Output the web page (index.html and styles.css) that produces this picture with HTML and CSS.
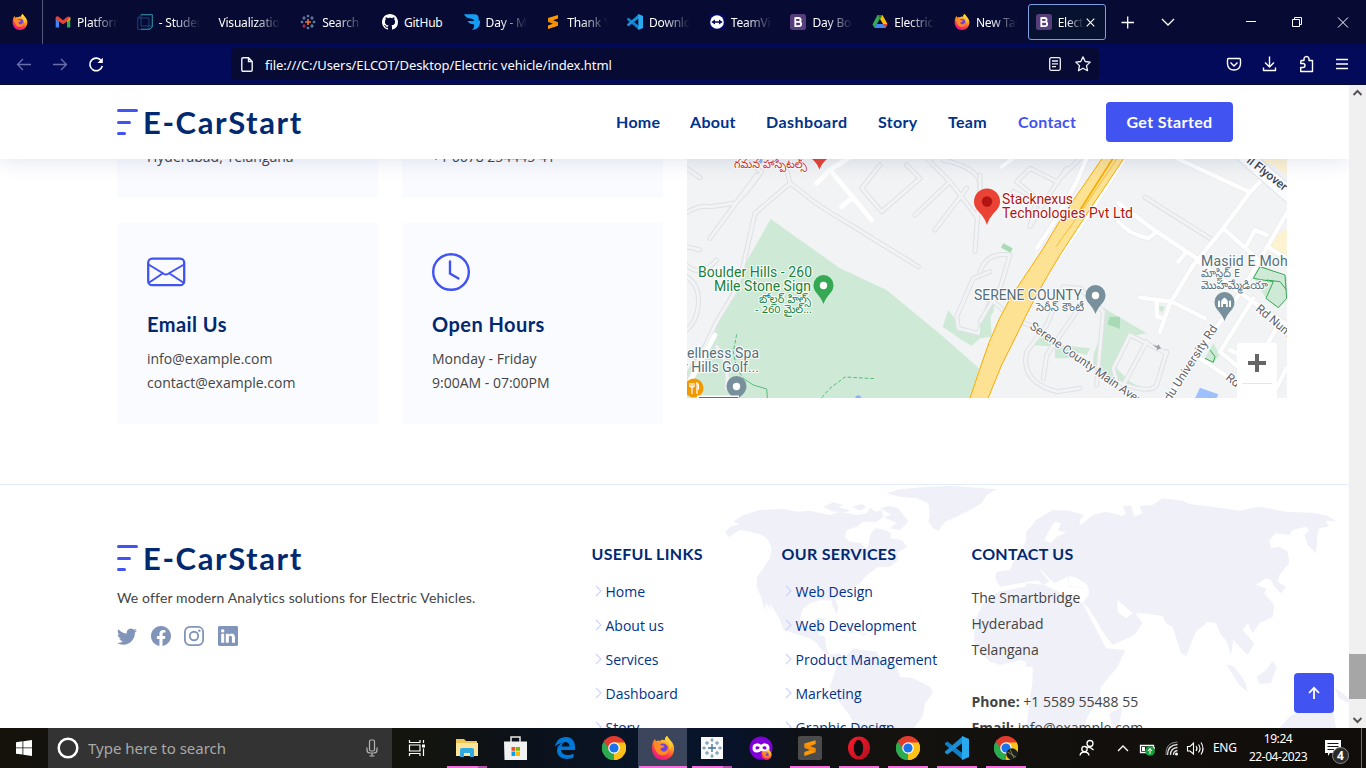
FILE: index.html
```html
<!DOCTYPE html>
<html lang="en">
<head>
<meta charset="utf-8">
<title>E-CarStart</title>
<link rel="stylesheet" href="styles.css">
</head>
<body>
<svg class="defs" width="0" height="0">
  <defs>
    <linearGradient id="ffg" x1=".8" y1="0" x2=".3" y2="1"><stop offset="0" stop-color="#fff44f"/><stop offset=".4" stop-color="#ff9a1f"/><stop offset=".7" stop-color="#ff3b4e"/><stop offset="1" stop-color="#e8128c"/></linearGradient>
    <linearGradient id="opg" x1="0" y1="0" x2="1" y2="1"><stop offset="0" stop-color="#ff1b2d"/><stop offset="1" stop-color="#b0101f"/></linearGradient>
    <symbol id="firefox" viewBox="0 0 24 24"><path fill="url(#ffg)" d="M1 12C1 8 2 5 4 3L5 5.500Q7 4 9 5C11 3 12 4 14 4C14 2 15 1 16 0C17 3 22 5 23 11C24 18 19 24 12 24S1 19 1 12Z"/><circle cx="12" cy="12.500" r="5" fill="#7440dc"/><path fill="#ff8b22" d="M3 7C6 6 8 8 11 9.500C14 9 14 11 11 12C9 12 9 14 11 15C14 17 16 14 17 12C18 18 14 20 10 19C5 18 3 12 3 7Z"/><path fill="#ffd13b" d="M14 4C18 6 20 9 18 14C22 11 21 6 16 0C14 1 14 3 14 4Z"/></symbol>
    <symbol id="chrome" viewBox="0 0 24 24"><path fill="#e33b2e" d="M12 12L1.600 6A12 12 0 0 1 22.400 6Z"/><path fill="#fbc116" d="M12 12L22.400 6A12 12 0 0 1 12 24Z"/><path fill="#2da94f" d="M12 12L12 24A12 12 0 0 1 1.600 6Z"/><path fill="#e33b2e" d="M12 6.500H22.600L21 4H2L7 14Z"/><path fill="#2da94f" d="M1.600 6L7 15L12 18L10 23.900A12 12 0 0 1 1.600 6Z"/><path fill="#fbc116" d="M22.600 6.500H12L17 15L12 24A12 12 0 0 0 22.600 6.500Z"/><circle cx="12" cy="12" r="5.800" fill="#fff"/><circle cx="12" cy="12" r="4.600" fill="#1a73e8"/></symbol>
    <symbol id="vscode" viewBox="0 0 24 24"><path fill="#0f7fc7" d="M0 7L2.500 5.500L18 17.500V24L0 8.500Z"/><path fill="#1a8fd6" d="M0 17L2.500 18.500L18 6.500V0L0 15.500Z"/><path fill="#29a9ee" d="M17 0L24 3V21L17 24Z"/></symbol>
    <symbol id="boot" viewBox="0 0 16 16"><rect width="16" height="16" rx="2.500" fill="#563d7c"/><path fill="none" stroke="#fff" stroke-width="1.800" d="M5.300 4H8.700Q10.600 4 10.600 6Q10.600 7.800 8.700 7.800H5.300M8.700 7.800Q11.200 7.800 11.200 10Q11.200 12.100 8.900 12.100H5.300V3.200"/></symbol>
    <symbol id="subl" viewBox="0 0 16 16"><path fill="#ff9800" d="M3 4L13 1V4.500L8 6.300L13 8.200V11.800L3 15V11.500L8 9.700L3 7.800Z"/><path fill="#d9780a" d="M3 7.800L8 9.700L13 11.800V8.200L8 6.300L3 4.500Z" opacity=".4"/></symbol>
    <symbol id="tableau" viewBox="0 0 24 24"><g fill="none" stroke-width="1.800"><path stroke="#e8762d" stroke-width="2.400" d="M12 7.500V16.500M7.500 12H16.500"/><path stroke="#6a9ab8" d="M12 1V5M10 3H14M12 19V23M10 21H14M1 12H5M3 10V14M19 12H23M21 10V14"/><path stroke="#7c87b5" d="M6 3.500V8.500M3.500 6H8.500M18 3.500V8.500M15.500 6H20.500"/><path stroke="#d8304a" d="M6 15.500V20.500M3.500 18H8.500"/><path stroke="#6f9fb5" d="M18 15.500V20.500M15.500 18H20.500"/></g></symbol>
    <symbol id="brand" viewBox="0 0 22 27"><g stroke="#4154f1" stroke-width="3" stroke-linecap="round"><path d="M1.500 1.500H19.500M1.500 13.500H12.500M1.500 24.500H7.500"/></g></symbol>
    <symbol id="chev" viewBox="0 0 7 12"><path d="M1 1L6 6L1 11" fill="none" stroke="#d0d4fc" stroke-width="1.200"/></symbol>
  </defs>
</svg>

<div class="tabs">
  <div class="pinned"><svg width="16" height="16"><use href="#firefox"/></svg></div>
  <div class="tab"><svg width="16" height="16" viewBox="0 0 16 16"><path fill="#4285f4" d="M.7 4V13.500H4V7Z"/><path fill="#34a853" d="M12 7V13.500H15.300V4Z"/><path fill="#fbbc04" d="M12 3.500L15.300 3V5.500L12 8Z"/><path fill="#ea4335" d="M.7 3.500Q2 1.500 4 3L8 6.200L12 3Q14 1.800 15.300 3.300L12 7.500L8 10.300L4 7.500L.7 5Z"/></svg><span class="label">Platform</span></div>
  <div class="tab"><svg width="16" height="16" viewBox="0 0 16 16"><path d="M4 .7H15.300V13L12.500 15.300H.7V4L4 .7V12H15.300M.7 4H12V15.300" fill="none" stroke="#23599a" stroke-width=".7"/><path d="M4 .7H15.300V13L12.500 15.300H4" fill="none" stroke="#2d8d99"/></svg><span class="label">- Student</span></div>
  <div class="tab"><span class="label wide">Visualization</span></div>
  <div class="tab"><svg width="16" height="16"><use href="#tableau"/></svg><span class="label">Search V</span></div>
  <div class="tab"><svg width="16" height="16" viewBox="0 0 16 16"><path fill="#fff" d="M8 0C3.580 0 0 3.580 0 8c0 3.540 2.290 6.530 5.470 7.590.4.070.55-.17.55-.38 0-.19-.01-.82-.01-1.490-2.010.37-2.530-.49-2.690-.94-.09-.23-.48-.94-.82-1.130-.28-.15-.68-.52-.01-.53.63-.01 1.080.58 1.230.82.72 1.210 1.870.87 2.330.66.070-.52.28-.87.51-1.070-1.780-.2-3.640-.89-3.640-3.950 0-.87.31-1.590.82-2.150-.08-.2-.36-1.020.08-2.120 0 0 .67-.21 2.200.82.64-.18 1.320-.27 2-.27.68 0 1.360.09 2 .27 1.530-1.040 2.200-.82 2.200-.82.44 1.100.16 1.920.08 2.120.51.56.82 1.270.82 2.150 0 3.070-1.870 3.750-3.650 3.950.29.25.54.73.54 1.480 0 1.070-.01 1.930-.01 2.200 0 .21.15.46.55.38A8.012 8.012 0 0 0 16 8c0-4.420-3.580-8-8-8z"/></svg><span class="label solid">GitHub</span></div>
  <div class="tab"><svg width="16" height="16" viewBox="0 0 16 16"><path fill="#159df5" d="M0 .3H11Q15.500 1 14.500 6L16 7Q16.500 15 8 16Q11 13 10 10.500Q5 10 3.500 7H10Q10 4.500 6 4.500Q2 4 0 .3Z"/></svg><span class="label">Day - M</span></div>
  <div class="tab"><svg width="16" height="16"><use href="#subl"/></svg><span class="label">Thank Yo</span></div>
  <div class="tab"><svg width="16" height="16"><use href="#vscode"/></svg><span class="label">Download</span></div>
  <div class="tab"><svg width="16" height="16" viewBox="0 0 16 16"><rect width="16" height="16" rx="2" fill="#050a5c"/><circle cx="8" cy="8" r="6.800" fill="#fff"/><path fill="#050a5c" d="M2.300 8L6 5.500V7.200H10V5.500L13.700 8L10 10.500V8.800H6V10.500Z"/></svg><span class="label">TeamVie</span></div>
  <div class="tab"><svg width="16" height="16"><use href="#boot"/></svg><span class="label">Day Boo</span></div>
  <div class="tab"><svg width="16" height="16" viewBox="0 0 16 16"><path fill="#34a853" d="M5.500 1H10L5.200 9.500L2.500 14L.5 10.500Z"/><path fill="#fbbc04" d="M5.500 1H10.500L15.500 10H11L8 5Z"/><path fill="#4285f4" d="M4.500 10H15.500L13.500 14H2.500Z"/><path fill="#ea4335" d="M11 10H15.500L13.500 14Z"/><path fill="#188038" d="M5.500 1H10.500L8 5.200Z"/></svg><span class="label">Electric V</span></div>
  <div class="tab"><svg width="16" height="16"><use href="#firefox"/></svg><span class="label">New Tab</span></div>
  <div class="tab active"><svg width="16" height="16"><use href="#boot"/></svg><span class="label short">Electric</span><svg class="x" width="9" height="9" viewBox="0 0 9 9"><path d="M.7.700L8.300 8.300M8.300.7L.7 8.300" stroke="#fff" stroke-width="1.100"/></svg></div>
  <svg class="wincontrols" width="260" height="44" viewBox="1106 0 260 44" fill="none" stroke="#fff" stroke-width="1.300"><path d="M1121.500 22.500H1134M1127.700 16.500V28.500M1162 19L1168 25L1174 19"/><path stroke-width="1" d="M1246 21.500H1256M1292.500 19.500H1299.500V26.500H1292.500ZM1294.500 19V17.500H1301.500V24.500H1300M1338 17.500L1348 27.500M1348 17.500L1338 27.500"/></svg>
</div>

<div class="toolbar">
  <svg class="navbtns" width="231" height="40" viewBox="0 44 231 40" fill="none" stroke-width="1.300"><path stroke="#6a6ea8" d="M31 64.500H17.500M23 59L17.500 64.500L23 70M53 64.500H66.500M61 59L66.500 64.500L61 70"/><path stroke="#fff" stroke-width="1.600" d="M101.500 61A6.300 6.300 0 1 0 102.300 66"/><path fill="#fff" d="M102.800 57.800V63H97.500Z"/></svg>
  <div class="urlbar">
    <svg width="12" height="15" viewBox="0 0 12 15" fill="none" stroke="#f2f2fa" stroke-width="1.400"><path d="M2 .8H7.500L11.200 4.500V13Q11.200 14.200 10 14.200H2Q.8 14.200.8 13V2Q.8.8 2 .8ZM7.500.8V4.500H11.200"/></svg>
    <span class="url">file:///C:/Users/ELCOT/Desktop/Electric vehicle/index.html</span>
    <svg class="reader" width="12" height="14" viewBox="0 0 12 14" fill="none" stroke="#f2f2fa" stroke-width="1.300"><rect x=".7" y=".7" width="10.600" height="12.600" rx="1.500"/><path d="M3 4H9M3 6.800H9M3 9.600H7"/></svg>
    <svg width="16" height="16" viewBox="0 0 16 16" fill="none" stroke="#f2f2fa" stroke-width="1.300" stroke-linejoin="round"><path d="M8 .9L10.200 5.500L15.200 6.100L11.500 9.600L12.500 14.700L8 12.200L3.500 14.700L4.500 9.600L.8 6.100L5.800 5.500Z"/></svg>
  </div>
  <svg class="toolicons" width="266" height="40" viewBox="1100 44 266 40" fill="none" stroke="#fff" stroke-width="1.400" stroke-linejoin="round"><path d="M1228.500 58.500H1239.500Q1240.500 58.500 1240.500 60V64Q1240 70 1234 70Q1228 70 1227.500 64V60Q1227.500 58.500 1228.500 58.500ZM1230.500 62.500L1234 66L1237.500 62.500"/><path d="M1269.500 56.500V67M1265 62.500L1269.500 67L1274 62.500M1263.500 67.500V70.500H1275.500V67.500"/><path d="M1301 60.500H1304V58.500Q1304.500 56.500 1306.500 56.500T1309 58.500V60.500H1312.500V71.500H1300.700V67.500H1303Q1305 67.500 1305 65.500T1303 63.500H1300.700Z"/><path d="M1336 59.500H1348M1336 64H1348M1336 68.500H1348" stroke-width="1.300"/></svg>
</div>

<div class="viewport">
 <div class="page">
  <header class="header">
    <a class="logo"><svg width="22" height="27"><use href="#brand"/></svg><span>E-CarStart</span></a>
    <nav class="nav">
      <a class="n1">Home</a><a class="n2">About</a><a class="n3">Dashboard</a><a class="n4">Story</a><a class="n5">Team</a><a class="n6 current">Contact</a>
      <a class="cta">Get Started</a>
    </nav>
  </header>
  <main class="content">
    <section class="contact">
      <div class="cards">
        <div class="card"><div class="ico"></div><h3>Address</h3><p>Hitech City<br>Hyderabad, Telangana</p></div>
        <div class="card"><div class="ico"></div><h3>Call Us</h3><p>+1 5589 55488 55<br>+1 6678 254445 41</p></div>
        <div class="card"><div class="ico"><svg width="39" height="38" viewBox="0 0 39 38" fill="none" stroke="#4154f1" stroke-width="2.300"><rect x="1.200" y="5.700" width="36" height="26.500" rx="4"/><path d="M1.500 11.500L15.500 20Q19 23 22.500 20L37 11.500M1.500 30L15.500 20.500M37 30L22.500 20.500" stroke-width="2"/></svg></div><h3>Email Us</h3><p>info@example.com<br>contact@example.com</p></div>
        <div class="card"><div class="ico"><svg width="38" height="38" viewBox="0 0 38 38" fill="none" stroke="#4154f1" stroke-width="2.400"><circle cx="19" cy="19" r="17.800"/><path d="M18 8.500V20.500L26.500 25.500" stroke-linecap="round"/></svg></div><h3>Open Hours</h3><p>Monday - Friday<br>9:00AM - 07:00PM</p></div>
      </div>
      <svg class="map" width="600" height="239" viewBox="687 159 600 239">
        <defs>
          <path id="thinL" d="M20 40L60 68M20 172Q60 150 90 155L165 145L200 110L245 50L200 20M230 60L90 250M190 330L225 175L330 85L320 45L270 10M330 85C370 110 390 140 480 190L715 335M20 275L60 285M20 330Q60 370 110 315M20 365Q60 390 55 450Q50 500 20 525M20 690L110 500L165 410L190 330M600 30L545 100L605 170L720 70L680 30M705 180L810 80L740 10M765 225L860 100M810 80L890 185M790 15Q900 40 900 90L885 290M930 440L895 535L835 520L830 485L880 370L930 350M110 575Q150 620 140 700"/>
          <path id="thinR" d="M110 80L150 40L230 80L300 10M110 80L170 130L150 215L200 130L260 40M100 110L180 150M0 60L0 110M495 127L690 250M0 350Q20 290 90 300L60 400L0 500M40 440L100 490L170 520M350 690L370 470L300 400L250 395L200 510L140 590Q120 680 230 710L300 700M190 670L200 600L290 470M560 590L530 690Q510 720 410 680L400 640L450 540L560 595M430 690L500 560"/>
          <path id="roadR" d="M590 10L810 112L730 220L640 330L570 445L540 530M850 70L810 112M730 220L830 310M415 200Q450 240 505 250L530 230L415 145M530 230L650 310L620 290L595 320M650 315L760 400L920 510M480 428L575 440L675 490M530 440L530 485L550 490M560 735L790 400L920 175M800 270L825 225L860 240M920 310L860 275M820 430L720 590L780 640M750 585L830 625L900 500M660 610L780 690M920 640L870 735M65 35L100 10M170 280L230 190L290 80L320 10M240 300L290 230L350 140L430 15"/>
        </defs>
        <rect x="687" y="159" width="600" height="239" fill="#f1f3f4"/>
        <g transform="translate(680 155) scale(.33333)">
          <path fill="#ceead6" d="M20 650L110 500L185 345L272 192L480 340L620 405L790 545L897 640L865 750H20Z"/>
          <path fill="#ceead6" d="M805 465L820 485L835 525L890 540L930 460L935 545L900 550L875 572L845 555L788 515Z"/>
          <g fill="none" stroke-linejoin="round" stroke-linecap="round"><use href="#thinL" stroke="#dfe1e4" stroke-width="15"/><use href="#thinL" stroke="#f1f3f4" stroke-width="9"/>
          <path stroke="#fff" stroke-width="14" d="M410 85L450 45L520 0M450 45L575 195M515 130L485 155M20 700L105 540"/></g>
          <path fill="none" stroke="#57bb78" stroke-width="3" d="M190 670L220 690L260 702L263 740"/>
          <path fill="none" stroke="#57bb78" stroke-width="3" stroke-dasharray="11 6" d="M170 538L160 590L170 640L190 670M425 728L450 700L495 666L585 671"/>
          <circle cx="535" cy="730" r="9" fill="#8ab4f8"/>
          <circle cx="240" cy="18" r="8" fill="#8ab4f8"/>
        </g>
        <g transform="translate(980 155) scale(.33333)">
          <path fill="#ceead6" d="M370 458L500 535L440 545L410 640L450 680L490 700L420 690L340 640V600L370 520ZM0 490L45 440L40 470L0 545ZM160 570L200 530L240 570L330 580L320 600L280 590L270 610L225 610V575ZM530 450L555 455L545 475ZM840 330L920 365V430L895 460L855 425L820 365ZM700 565L720 600L700 622L675 610Z"/>
          <path fill="#a8dab5" d="M390 485L420 485V522L382 508ZM70 265L98 280L92 293L63 278Z"/>
          <path fill="#fef3d0" d="M770 10H920V60L880 30ZM880 250L920 220V320L865 290Z"/>
          <g fill="none" stroke-linejoin="round" stroke-linecap="round"><use href="#thinR" stroke="#dfe1e4" stroke-width="15"/><use href="#thinR" stroke="#f1f3f4" stroke-width="9"/><use href="#roadR" stroke="#e6e8eb" stroke-width="16"/><use href="#roadR" stroke="#fff" stroke-width="13"/></g>
          <path d="M770 -20L940 130" stroke="#dfe3ec" stroke-width="50"/><path d="M770 -20L940 130" stroke="#fbfcff" stroke-width="44"/>
          <path fill="#fde293" stroke="#f9ab00" stroke-width="3" d="M-32 735L0 640Q50 480 130 370L190 280L250 180L370 5H435L345 140L240 300Q160 430 110 540L65 630L22 735Z"/>
          <path fill="none" stroke="#f9ab00" stroke-width="5" d="M402 5L300 165"/><path fill="none" stroke="#f9ab00" stroke-width="2" d="M415 5L300 175L228 275"/>
          <g fill="none" stroke="#34a853" stroke-width="3"><path d="M840 335L915 360L920 430L895 458L858 430L880 380L820 370L840 335M860 375L900 380L920 405M690 585L705 605L700 622L675 610"/></g>
          <path fill="#9fc1fb" d="M660 698L715 718L705 740H640Z"/>
          <path fill="#9aa0a6" d="M518 570L532 573L535 568L543 580L530 586L531 580Z"/>
        </g>
        <g class="pins">
          <path fill="#ea4335" d="M974 201.500A13 13 0 0 1 1000 201.500C1000 211 991 212 987 225C983 212 974 211 974 201.500Z"/><circle cx="987" cy="201.500" r="5.200" fill="#b31412"/>
          <path fill="#34a853" d="M813.500 285A10 10 0 0 1 833.500 285C833.500 293 827 294 823.500 304C820 294 813.500 293 813.500 285Z"/><circle cx="823.500" cy="285.500" r="3.700" fill="#fff"/>
          <path fill="#78909c" d="M1085.500 295A10 10 0 0 1 1105.500 295C1105.500 303 1099 304 1095.500 314C1092 304 1085.500 303 1085.500 295Z"/><circle cx="1095.500" cy="295.500" r="3.700" fill="#fff"/>
          <path fill="#78909c" d="M1214.500 302A10 10 0 0 1 1234.500 302C1234.500 310 1228 311 1224.500 321C1221 311 1214.500 310 1214.500 302Z"/><path fill="#fff" d="M1218 307V301.500L1219 300L1220 301.500V307H1221.200V301Q1222 299 1224.500 297.500Q1227 299 1227.800 301V307H1229V301.500L1230 300L1231 301.500V307H1226V304H1223V307Z"/>
          <path fill="#78909c" d="M726.500 386A10 10 0 0 1 746.500 386C746.500 392 742 395 739 398H733C731 395 726.500 392 726.500 386Z"/><circle cx="736.500" cy="386.500" r="3.700" fill="#fff"/>
          <circle cx="694" cy="388" r="9.500" fill="#f29900"/><path d="M690 383V387M692 383V394M694 383V387M690 387H694M697 394V383Q699 384 698.500 389H697" stroke="#fff" stroke-width="1.200" fill="none"/>
          <path fill="#ea4335" d="M812 159H827Q822 163 819.500 169.500Q817 163 812 159Z"/>
          <path d="M698 398V396.500H739" stroke="#fff" stroke-width="2" fill="none"/><path d="M699 397.700H738" stroke="#75695a" stroke-width="1.400"/>
        </g>
        <g class="maptext">
          <text x="1002" y="204" textLength="71" fill="#b3140f">Stacknexus</text><text x="1002" y="218" textLength="131" fill="#b3140f">Technologies Pvt Ltd</text>
          <text x="698" y="277" textLength="114" fill="#188038">Boulder Hills - 260</text><text x="714" y="291" textLength="97" fill="#188038">Mile Stone Sign</text>
          <text class="te" x="759" y="303" textLength="52" lengthAdjust="spacingAndGlyphs" fill="#188038">బోల్లర్ హిల్స్</text><text class="te" x="755" y="313" textLength="57" lengthAdjust="spacingAndGlyphs" fill="#188038">- 260 మైల్...</text>
          <text class="te" x="734" y="168" textLength="73" lengthAdjust="spacingAndGlyphs" fill="#d93025">గమన హాస్పిటల్స్</text>
          <text x="974" y="300" textLength="108" fill="#546e7a">SERENE COUNTY</text><text class="te" x="1036" y="311" textLength="48" lengthAdjust="spacingAndGlyphs" fill="#546e7a">సెరీన్ కౌంటీ</text>
          <text x="1201" y="266" fill="#546e7a" letter-spacing=".2">Masjid E Moham</text>
          <text class="te" x="1201" y="277" textLength="39" lengthAdjust="spacingAndGlyphs" fill="#546e7a">మాస్జిద్ E</text><text class="te" x="1201" y="289" textLength="67" lengthAdjust="spacingAndGlyphs" fill="#546e7a">మొహమ్మేడియా</text>
          <text x="687" y="358" textLength="72" fill="#546e7a">ellness Spa</text><text x="683" y="372" textLength="76" fill="#546e7a">r Hills Golf...</text>
          <text class="road" transform="translate(1029 328) rotate(35)" textLength="148">Serene County Main Avenue</text>
          <text class="road" transform="translate(1170 402) rotate(-57)" textLength="88">du University Rd</text>
          <text class="road" transform="translate(1255 310) rotate(40)">Rd Number</text>
          <text class="road" transform="translate(1225 379) rotate(38)">Rd No</text>
          <text class="road dark" transform="translate(1246 162) rotate(38)">ll Flyover</text>
        </g>
        <rect x="1237" y="343" width="40" height="60" rx="2" fill="#fff"/><path d="M1248 363H1266M1257 354V372" stroke="#666" stroke-width="4"/><path d="M1242 383.500H1272" stroke="#e6e6e6"/>
      </svg>
    </section>
    <footer class="footer">
      <svg class="world" width="649" height="243" viewBox="700 485 649 243" fill="#f0f0f9">
        <g transform="translate(700 480) scale(.33333)">
          <path d="M75 155L95 138L120 133L100 125L130 105L180 90L250 87L290 95L330 92L390 105L420 95L470 105L500 100L510 82L525 95L545 90L550 110L530 125L490 125L470 140L440 150L435 172L450 185L485 190L495 205L505 200L510 165L525 145L550 148L575 160L570 175L605 180L622 200L590 220L560 215L540 235L570 235L590 220L595 240L570 260L550 262L535 260L500 285L480 310L460 322L430 345L405 355L415 385L410 402L398 380L395 362L360 360L330 370L310 385L300 415L310 435L335 445L350 415L375 413L365 445L355 465L375 470L378 500L390 525L415 520L435 530L460 505L490 510L530 515L545 540L590 560L600 590L640 595L690 620L698 640L675 670L668 710L640 745H470L445 700L405 650L390 620L400 590L410 560L425 540L405 540L370 515L350 490L330 475L250 450L240 420L210 370L212 390L200 370L195 385L210 410L190 380L185 355L170 320L172 290L210 235L215 205L205 180L185 165L150 155L120 150L95 165L85 172Z"/>
          <path d="M370 80L400 67L430 75L415 82L450 90L440 97L400 95ZM455 80L485 72L500 82L480 92ZM540 85L570 77L595 85L625 125L600 150L570 145L590 130L550 110L575 105ZM560 40L600 28L680 20L760 18L890 28L860 45L845 70L810 90L760 115L735 125L715 153L700 145L685 125L690 105L685 70L650 55L600 50Z"/>
          <path d="M415 445L450 450L470 460L450 462ZM470 455L505 460L490 468Z" opacity=".7"/>
          <path d="M970 195L985 180L1000 188L995 215L975 210ZM978 155L1010 125L1040 110V210L980 240L1020 260V300L960 310L900 320L885 295L890 275L930 270L940 245L985 215L1005 165Z"/>
          <path d="M895 335L1000 315L1030 320V745L1020 560L990 550L960 540L900 555L870 545L830 505L822 480L825 420L850 370Z"/>
        </g>
        <g transform="translate(1026 480) scale(.33333)">
          <path d="M0 160L30 120L80 90L130 92L175 105L160 122L165 135L200 105L240 95L290 108L300 100L290 80L315 75L325 110L350 100L340 78L380 75L410 55L470 62L490 72L560 80L640 92L700 80L780 95L860 98L905 108L932 125L900 122L908 140L880 145L875 160L870 220L845 195L835 165L850 150L838 140L800 150L790 165L750 160L730 180L735 205L760 200L785 215L790 250L760 285L755 305L780 320L765 340L745 320L735 300L720 295L690 315L720 325L715 340L745 375L740 410L700 430L680 460L665 430L650 450L685 490L665 525L640 500L622 480L615 525L600 480L585 465L570 430L545 425L510 455L480 528L465 520L440 440L420 430L410 408L350 400L320 400L275 360L275 395L300 415L325 395L350 430L325 465L260 495L240 470L185 380L170 370L188 345V325L130 320L125 290L105 300L85 310L60 285L35 260L70 305L50 315L0 270Z"/>
          <path d="M0 310L55 315L130 350L170 370L240 505L298 510L275 560L225 620L220 660L190 700L170 745H0L20 600L20 560H0ZM250 700L290 680L280 730L260 745ZM600 552L625 560L660 610L665 635L640 615ZM692 590L720 570L740 542L752 560L735 610L700 612ZM760 745L790 710L830 690L870 700L900 690L920 680L930 745ZM925 622L969 655V670L940 655Z"/>
          <path fill="#fff" d="M65 160L85 125L105 130L95 150L120 158L90 172L75 190L55 180ZM128 288L150 292L185 315L185 325L130 318Z"/>
        </g>
      </svg>
      <div class="about">
        <a class="logo"><svg width="22" height="27"><use href="#brand"/></svg><span>E-CarStart</span></a>
        <p>We offer modern Analytics solutions for Electric Vehicles.</p>
        <div class="social">
          <svg viewBox="0 0 16 16"><path d="M5.026 15c6.038 0 9.341-5.003 9.341-9.334 0-.14 0-.282-.006-.422A6.685 6.685 0 0 0 16 3.542a6.658 6.658 0 0 1-1.889.518 3.301 3.301 0 0 0 1.447-1.817 6.533 6.533 0 0 1-2.087.793A3.286 3.286 0 0 0 7.875 6.030a9.325 9.325 0 0 1-6.767-3.429 3.289 3.289 0 0 0 1.018 4.382A3.323 3.323 0 0 1 .64 6.575v.045a3.288 3.288 0 0 0 2.632 3.218 3.203 3.203 0 0 1-.865.115 3.230 3.230 0 0 1-.614-.057 3.283 3.283 0 0 0 3.067 2.277A6.588 6.588 0 0 1 .78 13.580a6.320 6.320 0 0 1-.78-.045A9.344 9.344 0 0 0 5.026 15z"/></svg>
          <svg viewBox="0 0 16 16"><path d="M16 8.049c0-4.446-3.582-8.050-8-8.050C3.580 0-.002 3.603-.002 8.050c0 4.017 2.926 7.347 6.750 7.951v-5.625h-2.030V8.050H6.750V6.275c0-2.017 1.195-3.131 3.022-3.131.876 0 1.791.157 1.791.157v1.980h-1.009c-.993 0-1.303.621-1.303 1.258v1.510h2.218l-.354 2.326H9.250V16c3.824-.604 6.750-3.934 6.750-7.951z"/></svg>
          <svg viewBox="0 0 16 16"><g fill="none" stroke="#8194ba" stroke-width="1.440"><rect x=".72" y=".72" width="14.560" height="14.560" rx="4"/><circle cx="8" cy="8" r="3.400"/></g><circle cx="12.270" cy="3.730" r=".96"/></svg>
          <svg viewBox="0 0 16 16"><path d="M0 1.146C0 .513.526 0 1.175 0h13.650C15.474 0 16 .513 16 1.146v13.708c0 .633-.526 1.146-1.175 1.146H1.175C.526 16 0 15.487 0 14.854V1.146zm4.943 12.248V6.169H2.542v7.225h2.401zm-1.200-8.212c.837 0 1.358-.554 1.358-1.248-.015-.709-.52-1.248-1.342-1.248-.822 0-1.359.54-1.359 1.248 0 .694.521 1.248 1.327 1.248h.016zm4.908 8.212V9.359c0-.216.016-.432.080-.586.173-.431.568-.878 1.232-.878.869 0 1.216.662 1.216 1.634v3.865h2.401V9.250c0-2.220-1.184-3.252-2.764-3.252-1.274 0-1.845.7-2.165 1.193v.025V6.169h-2.400c.03.678 0 7.225 0 7.225h2.400z"/></svg>
        </div>
      </div>
      <div class="links"><h4>USEFUL LINKS</h4>
        <a><svg width="7" height="12"><use href="#chev"/></svg>Home</a><a><svg width="7" height="12"><use href="#chev"/></svg>About us</a><a><svg width="7" height="12"><use href="#chev"/></svg>Services</a><a><svg width="7" height="12"><use href="#chev"/></svg>Dashboard</a><a><svg width="7" height="12"><use href="#chev"/></svg>Story</a></div>
      <div class="links"><h4>OUR SERVICES</h4>
        <a><svg width="7" height="12"><use href="#chev"/></svg>Web Design</a><a><svg width="7" height="12"><use href="#chev"/></svg>Web Development</a><a><svg width="7" height="12"><use href="#chev"/></svg>Product Management</a><a><svg width="7" height="12"><use href="#chev"/></svg>Marketing</a><a><svg width="7" height="12"><use href="#chev"/></svg>Graphic Design</a></div>
      <div class="links reach"><h4>CONTACT US</h4>
        <p>The Smartbridge<br>Hyderabad<br>Telangana<br><br><b>Phone:</b> +1 5589 55488 55<br><b>Email:</b> info@example.com</p></div>
    </footer>
  </main>
  <a class="totop"><svg width="14" height="14" viewBox="0 0 14 14" fill="none" stroke="#fff" stroke-width="1.800"><path d="M7 13V2M2 7L7 1.800L12 7"/></svg></a>
 </div>
 <div class="scrollbar"><svg width="17" height="18" viewBox="0 0 17 18"><path d="M4.500 10L8.500 6L12.500 10" fill="none" stroke="#555" stroke-width="2"/></svg><div class="thumb"></div><svg width="17" height="16" viewBox="0 0 17 16"><path d="M4.500 6L8.500 10L12.500 6" fill="none" stroke="#555" stroke-width="2"/></svg></div>
</div>

<div class="taskbar">
  <div class="start"><svg width="16" height="16" viewBox="0 0 16 16" fill="#fff"><path d="M0 2.200L6.500 1.300V7.500H0ZM7.300 1.200L16 0V7.500H7.300ZM0 8.300H6.500V14.600L0 13.700ZM7.300 8.300H16V16L7.300 14.800Z"/></svg></div>
  <div class="search"><svg width="22" height="22" viewBox="0 0 22 22"><circle cx="11" cy="11" r="9.300" fill="none" stroke="#fff" stroke-width="2.500"/></svg><span>Type here to search</span><svg class="mic" width="12" height="18" viewBox="0 0 12 18" fill="none" stroke="#b5b5b5" stroke-width="1.200"><rect x="3.500" y="1" width="5" height="11" rx="1.500"/><path d="M1 8.500V11Q1 14 4 14H8Q11 14 11 11V8.500M6 14V17M3.500 17H8.500"/></svg></div>
  <div class="app view"><svg width="18" height="16" viewBox="0 0 18 16" fill="none" stroke="#fff" stroke-width="1.200"><path d="M1.500 0V2.500H12V0M1.500 16V13.500H12V16M1.500 5H12V11H1.500ZM15.500 0V3M15.500 8.500V16"/><path d="M14 4.500H17V7.500H14Z" fill="#fff" stroke="none"/></svg></div>
  <div class="app open split"><svg width="22" height="20" viewBox="0 0 22 20"><path fill="#f0c556" d="M0 1H8L10 3H21V18H0Z"/><path fill="#ffe59a" d="M0 5H22V18H0Z"/><path fill="#2fa9df" d="M4 19V12Q4 10 6 10H16Q18 10 18 12V19H14V15H8V19Z"/></svg></div>
  <div class="app"><svg width="24" height="24" viewBox="0 0 24 24"><path d="M7 6V1H16V6" fill="none" stroke="#e8e8e8" stroke-width="1.500"/><path fill="#f2f2f2" d="M0 5.500H23V24H.5Z"/><path fill="#f25022" d="M7.500 11H11.300V14.800H7.500Z"/><path fill="#7fba00" d="M12 11H16V14.800H12Z"/><path fill="#00a4ef" d="M7.500 15.500H11.300V20H7.500Z"/><path fill="#ffb900" d="M12 15.500H16V20H12Z"/></svg></div>
  <div class="app"><svg width="22" height="22" viewBox="0 0 22 22"><path fill="#0078d7" d="M1 10C2 3.500 6 0 12 0C18 0 21 4.500 21 10V13H7C7.500 18 14 19.500 19.500 16.500V20.500C12 24 3 21 3 13.500C3 10 5 7.500 8.500 6C5 6.500 2.500 7.500 1 10ZM7.500 9.500H15.500C15.500 6.500 13.500 5 11.500 5S8 6.500 7.500 9.500Z"/></svg></div>
  <div class="app"><svg width="24" height="24"><use href="#chrome"/></svg></div>
  <div class="app open focus"><svg width="24" height="24"><use href="#firefox"/></svg></div>
  <div class="app open split"><svg width="22" height="22" viewBox="0 0 22 22"><rect width="22" height="22" fill="#fafafa"/><g stroke="#3c7295" stroke-width="1"><path d="M11 7V15M7 11H15" stroke-width="1.300"/><path d="M11 1V5M9.500 3H12.500M11 17V21M9.500 19H12.500M1 11H5M3 9.500V12.500M17 11H21M19 9.500V12.500M6 4V8M4 6H8M16 4V8M14 6H18M6 14V18M4 16H8M16 14V18M14 16H18" opacity=".8"/></g></svg></div>
  <div class="app"><svg width="24" height="24" viewBox="0 0 24 24"><circle cx="12" cy="12" r="11.500" fill="#8000d7"/><path d="M12 11C10 8 5 8 5 12S10 16 12 12.500C14 16 19 16 19 12S14 8 12 11Z" fill="none" stroke="#fff" stroke-width="3"/><svg x="12" y="13" width="11" height="11"><use href="#firefox"/></svg></svg></div>
  <div class="app open"><svg width="24" height="24" viewBox="0 0 24 24"><rect width="24" height="24" rx="2" fill="#4b4b4b"/><svg x="3" y="3" width="18" height="18"><use href="#subl"/></svg></svg></div>
  <div class="app open"><svg width="24" height="24" viewBox="0 0 24 24"><ellipse cx="12" cy="12" rx="11" ry="11.500" fill="url(#opg)"/><ellipse cx="11.500" cy="12" rx="4.700" ry="8.300" fill="#0d0d0e"/></svg></div>
  <div class="app open"><svg width="24" height="24"><use href="#chrome"/></svg></div>
  <div class="app open"><svg width="24" height="24"><use href="#vscode"/></svg></div>
  <div class="app open"><svg width="24" height="24" viewBox="0 0 24 24"><use href="#chrome"/><circle cx="18" cy="18" r="5.800" fill="#17211f"/><path d="M13.500 16L22 21M16 13.500L20 22" stroke="#8d7a40" stroke-width="1"/></svg></div>
  <svg class="tray" width="182" height="40" viewBox="1031 728 182 40" fill="none" stroke="#fff" stroke-width="1.300"><circle cx="1090" cy="743.500" r="3"/><path d="M1085.500 747.500Q1090 746 1093.500 750"/><circle cx="1084.500" cy="749" r="2.700"/><path d="M1080 755.500Q1080.500 752 1084.500 752T1089 755.500M1118 751L1123 746L1128 751"/><path d="M1140.500 745.500H1153.500V752.500H1140.500ZM1154 748H1155"/><path fill="#fff" stroke="none" d="M1142 747H1145V751H1142Z"/><circle cx="1150" cy="751" r="4.800" fill="#16a13a" stroke="none"/><path d="M1150 748.500V754M1148 751L1150 748.500L1152 751" stroke-width="1"/><path d="M1167.500 755Q1167.500 745 1177.500 744.500M1170.500 755Q1170.500 748 1177.500 747.500M1173.500 755Q1173.500 751 1177.500 750.500" stroke="#ddd"/><path d="M1166 755Q1165 742.500 1177.500 742" stroke="#888" stroke-width="1"/><circle cx="1176.500" cy="754" r="1.500" fill="#fff" stroke="none"/><path d="M1187.500 746.500H1190L1193.500 743V754L1190 751H1187.500ZM1196 746Q1198 748.500 1196 751M1198.500 744.500Q1201.500 748.500 1198.500 752.500M1201 742.500Q1205 748.500 1201 754.500" stroke-width="1.100"/></svg>
  <span class="lang">ENG</span>
  <div class="clock"><span class="time">19:24</span><span>22-04-2023</span></div>
  <svg class="notify" width="50" height="40" viewBox="1316 728 50 40"><path fill="#fff" d="M1325 740H1341V753H1330L1328 756V753H1325Z"/><path d="M1327.500 743.500H1338.500M1327.500 746.500H1338.500M1327.500 749.500H1334" stroke="#15130f" stroke-width="1"/><circle cx="1340.500" cy="755.500" r="8" fill="#2b2b2b" stroke="#888"/><text x="1337" y="760" class="badge">4</text><path d="M1361.500 728V768" stroke="#6c6c6c"/></svg>
</div>
</body>
</html>
```
FILE: styles.css
```css
* { box-sizing: border-box; }
body { margin: 0; width: 1366px; height: 768px; overflow: hidden; display: flex; flex-direction: column; background: #fff; font-family: "Open Sans", sans-serif; color: #444; }
h3, h4, p { margin: 0; }
svg { display: block; flex: none; }
.defs { position: absolute; }

.tabs { height: 44px; flex: none; background: #070b34; display: flex; align-items: center; color: #fff; font-family: "Noto Sans", sans-serif; font-size: 12px; }
.pinned { width: 43px; height: 44px; padding-left: 12px; margin-right: 4px; display: flex; align-items: center; border-right: 1px solid #55587a; }
.tab { width: 81.720px; flex: none; height: 36px; padding-left: 8px; display: flex; align-items: center; gap: 6px; }
.label { width: 41px; overflow: hidden; white-space: nowrap; letter-spacing: -.2px; -webkit-mask-image: linear-gradient(90deg, #000 35%, transparent 100%); mask-image: linear-gradient(90deg, #000 35%, transparent 100%); }
.label.wide { width: 62px; -webkit-mask-image: linear-gradient(90deg, #000 60%, transparent 100%); mask-image: linear-gradient(90deg, #000 60%, transparent 100%); }
.label.solid { -webkit-mask-image: none; mask-image: none; }
.label.short { width: 26px; }
.tab.active { width: 78px; padding-left: 7px; background: #06122f; border: 1px solid #7f9ee0; border-radius: 3px; }
.tab.active .x { margin-left: -4px; }
.wincontrols { margin-left: auto; }

.toolbar { height: 41px; flex: none; background: #030a5a; display: flex; border-bottom: 1px solid #080a30; }
.urlbar { width: 868px; height: 32px; margin-top: 4px; background: #070b34; border-radius: 4px; display: flex; align-items: center; padding: 0 8px 0 10px; color: #fbfbfe; font-family: "Noto Sans", sans-serif; }
.url { margin-left: 12px; padding-top: 2px; font-size: 13px; letter-spacing: -.07px; white-space: nowrap; }
.reader { margin-left: auto; margin-right: 14px; }
.toolicons { margin-left: auto; }

.viewport { height: 643px; flex: none; display: flex; }
.page { width: 1349px; position: relative; display: flex; flex-direction: column; overflow: hidden; }
.header { height: 74px; flex: none; z-index: 2; background: #fff; box-shadow: 0 2px 20px rgba(1,41,112,.12); padding: 0 116px 0 117px; display: flex; justify-content: space-between; align-items: center; }
.logo { display: flex; align-items: center; gap: 4px; height: 40px; color: #012970; font: 700 31px/40px Lato, sans-serif; letter-spacing: 1.600px; white-space: nowrap; }
.nav { display: flex; gap: 30px; align-items: center; font: 700 16px/20px Lato, sans-serif; letter-spacing: .3px; color: #013289; white-space: nowrap; }
.nav a:not(.cta) { padding-bottom: 1px; }
.n1 { width: 44px; } .n2 { width: 46px; } .n3 { width: 82px; letter-spacing: .450px; } .n4 { width: 40px; } .n5 { width: 40px; } .n6 { width: 58px; }
.nav .current { color: #4154f1; }
.cta { width: 127px; height: 40px; border-radius: 4px; background: #4154f1; color: #fff; text-align: center; line-height: 39px; letter-spacing: .4px; }
.content { height: 569px; overflow: hidden; }
.contact { height: 325px; padding-left: 117px; display: flex; gap: 24px; }
.cards { width: 546px; flex: none; margin-top: -162px; display: grid; grid-template-columns: 261px 261px; grid-template-rows: 201px 201px; gap: 25px 24px; height: 427px; }
.card { background: #fafbff; padding: 30px; }
.ico { height: 38px; }
.card h3 { margin: 21px 0 11px; font: 700 20px/24px Lato, sans-serif; letter-spacing: .450px; color: #012970; }
.card p { font-size: 14px; line-height: 24px; white-space: nowrap; }
.maptext { font: 14px Roboto, sans-serif; stroke: #fff; stroke-width: 2px; stroke-linejoin: round; }
.maptext text { paint-order: stroke; }
.maptext .te { font: 11.500px "Noto Sans Telugu", "Noto Sans", sans-serif; }
.maptext .road { font-size: 12px; font-weight: 400; fill: #5f6368; }
.maptext .dark { font-weight: 500; fill: #3c4450; }

.footer { position: relative; z-index: 0; height: 244px; border-top: 1px solid #e1ecff; padding-left: 117px; display: flex; }
.world { position: absolute; right: 0; top: 0; z-index: -1; }
.about { width: 474.500px; padding-top: 53px; }
.about p { margin-top: 8px; font: 14px/24px Lato, sans-serif; letter-spacing: .140px; }
.social { display: flex; gap: 13.600px; margin-top: 16px; }
.social svg { width: 20px; height: 20px; fill: #8194ba; }
.links { width: 190px; padding-top: 59px; white-space: nowrap; font-size: 14px; }
.links h4 { font: 700 16px/20px Lato, sans-serif; letter-spacing: .3px; color: #012970; margin-bottom: 10px; }
.links a { display: flex; align-items: center; gap: 4px; height: 34px; padding-left: 3px; color: #013289; }
.reach p { line-height: 26px; padding-top: 11px; }
.totop { position: absolute; right: 15px; bottom: 15px; z-index: 3; width: 40px; height: 40px; border-radius: 4px; background: #4154f1; display: flex; align-items: center; justify-content: center; }
.scrollbar { width: 17px; background: #f0f0f0; display: flex; flex-direction: column; }
.thumb { height: 45px; margin-top: 551px; margin-bottom: 13px; background: #a6a6a6; }

.taskbar { height: 40px; flex: none; display: flex; color: #fff; background: linear-gradient(90deg, #15120c 0, #13140f 430px, #0b111b 530px, #081527 640px, #07132a 730px, #0e1116 800px, #14120e 880px, #100d0b 100%); font-family: "Noto Sans", sans-serif; }
.start { width: 48px; display: flex; align-items: center; justify-content: center; }
.search { width: 344px; background: #333; display: flex; align-items: center; padding: 0 14px 0 9px; gap: 9px; color: #a9a9a9; font-size: 15px; }
.mic { margin-left: auto; }
.app { width: 49px; display: flex; align-items: center; justify-content: center; }
.app.view { width: 50px; padding-right: 1px; }
.app.open { background: linear-gradient(#f26fdc, #f26fdc) center bottom / 40px 2px no-repeat; }
.app.focus { background: linear-gradient(#f26fdc, #f26fdc) center bottom / 48px 2px no-repeat, #3b465c; }
.app.split { background: linear-gradient(90deg, #f26fdc 31px, #b653a8 31px) center bottom / 40px 2px no-repeat; }
.tray { margin-left: 1px; }
.lang { width: 24px; font-size: 12px; line-height: 40px; letter-spacing: -.3px; }
.clock { margin-left: auto; width: 64px; display: flex; flex-direction: column; align-items: center; font-size: 12px; line-height: 18px; padding-top: 2px; letter-spacing: -.450px; white-space: nowrap; }
.notify { margin-left: 6px; }
.badge { font: 700 12px "Noto Sans", sans-serif; fill: #fff; }
```
